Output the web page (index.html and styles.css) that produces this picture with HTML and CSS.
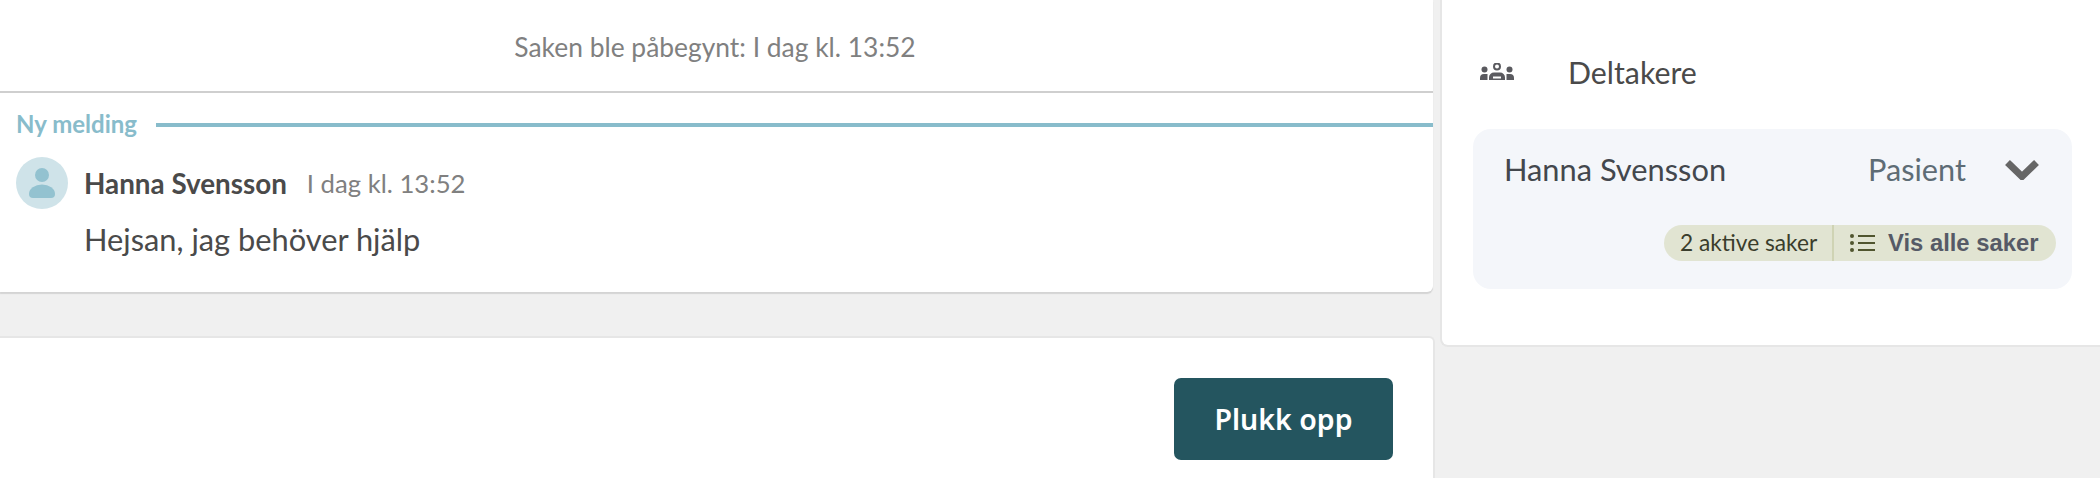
FILE: index.html
```html
<!DOCTYPE html>
<html lang="no">
<head>
<meta charset="utf-8">
<title>Sak</title>
<link rel="stylesheet" href="styles.css">
</head>
<body>
<div class="page">
  <main class="main">
    <section class="thread">
      <div class="started">Saken ble påbegynt: I dag kl. 13:52</div>
      <div class="new-row"><span class="new-label">Ny melding</span><span class="new-line"></span></div>
      <div class="msg-head">
        <span class="avatar">
          <svg viewBox="0 0 52 52" width="52" height="52"><circle cx="26" cy="18" r="7" fill="#93c2d0"/><path d="M13 37a13 9.500 0 0 1 26 0a4 4 0 0 1-4 4H17a4 4 0 0 1-4-4z" fill="#93c2d0"/></svg>
        </span>
        <span class="author">Hanna Svensson</span>
        <span class="time">I dag kl. 13:52</span>
      </div>
      <div class="msg-body">Hejsan, jag behöver hjälp</div>
    </section>
    <section class="actions">
      <button class="pick">Plukk opp</button>
    </section>
  </main>
  <aside class="side">
    <div class="side-title">
      <svg class="people" viewBox="0 0 34 18" width="34" height="18"><circle cx="17" cy="3.500" r="3" fill="none" stroke="#5a5a5f" stroke-width="2"/><path d="M9 17v-2.500a5 5 0 0 1 5-5h6a5 5 0 0 1 5 5V17z" fill="#5a5a5f"/><path d="M13 14.500h8" stroke="#fff" stroke-width="2"/><circle cx="4.500" cy="6.500" r="3" fill="#5a5a5f"/><circle cx="29.500" cy="6.500" r="3" fill="#5a5a5f"/><path d="M0 17v-2a4 4 0 0 1 4-4h3.500v6zM34 17v-2a4 4 0 0 0-4-4h-3.500v6z" fill="#5a5a5f"/></svg>
      <span>Deltakere</span>
    </div>
    <div class="person">
      <div class="person-row">
        <span class="person-name">Hanna Svensson</span>
        <span class="role">Pasient</span>
        <svg class="chev" viewBox="0 0 34 21" width="34" height="21"><path d="M2.500 3.500L17 17.500L31.500 3.500" fill="none" stroke="#666" stroke-width="7"/></svg>
      </div>
      <div class="pill-row">
        <div class="pill">
          <span class="count">2 aktive saker</span>
          <span class="show">
            <svg viewBox="0 0 25 20" width="25" height="20"><circle cx="2" cy="3" r="2" fill="#50552f"/><circle cx="2" cy="10" r="2" fill="#50552f"/><circle cx="2" cy="17" r="2" fill="#50552f"/><path d="M8 3h17M8 10h17M8 17h17" stroke="#50552f" stroke-width="2"/></svg>
            <span class="show-text">Vis alle saker</span>
          </span>
        </div>
      </div>
    </div>
  </aside>
</div>
</body>
</html>
```
FILE: styles.css
```css
* { box-sizing: border-box; }
html, body { margin: 0; height: 478px; overflow: hidden; background: #f0f0f0; }
body { font-family: Lato, "Noto Sans", sans-serif; color: #4a4a4a; }
.page { display: flex; gap: 7px; height: 478px; }
.main { width: 1433px; display: flex; flex-direction: column; gap: 44px; }
.thread { height: 292px; background: #fff; border-radius: 0 0 6px 0; box-shadow: 0 2px 1px #d4d4d4; }
.started { height: 93px; padding-right: 3px; border-bottom: 2px solid #cfcfcf; text-align: center; font-size: 26.400px; line-height: 94px; color: #808080; }
.new-row { display: flex; align-items: center; gap: 19px; padding: 0 0 1px 16px; height: 64px; }
.new-label { font-size: 24px; line-height: 28px; margin-top: -2px; font-weight: 700; color: #88bccb; }
.new-line { flex: 1; height: 4px; background: #88bccb; }
.msg-head { display: flex; align-items: center; height: 52px; padding-left: 16px; }
.avatar { width: 52px; height: 52px; border-radius: 50%; background: #cfe3e9; display: flex; margin-right: 16px; }
.author { font-size: 27.800px; font-weight: 700; color: #4a4a4a; margin-right: 20px; }
.time { font-size: 25.700px; color: #808080; }
.msg-body { padding: 11px 0 0 84px; font-size: 30.800px; line-height: 40px; color: #4a4a4a; }
.actions { flex: 1; margin-right: -2px; background: #fff; border-radius: 0 6px 0 0; border-top: 2px solid #e6e6e6; border-right: 2px solid #e6e6e6; display: flex; justify-content: flex-end; align-items: flex-start; padding: 40px 40px 0 0; }
.pick { width: 219px; height: 82px; border: 0; border-radius: 7px; background: #24555f; color: #fff; font: 600 28.500px "Noto Sans", sans-serif; }
.side { flex: 1; height: 347px; background: #fff; border-left: 2px solid #e6e6e6; border-bottom: 2px solid #e6e6e6; border-radius: 0 0 0 8px; padding: 0 28px 0 31px; }
.side-title { display: flex; align-items: center; height: 129px; padding: 15px 0 0 7px; font-size: 30.300px; color: #4a4a4a; }
.people { margin-right: 54px; }
.person { height: 160px; background: #f4f6fa; border-radius: 18px; padding: 0 16px 0 31px; }
.person-row { display: flex; align-items: center; height: 80px; padding-right: 17px; }
.person-name { flex: 1; font-size: 30.800px; color: #43474d; }
.role { font-size: 30.700px; color: #5e6c75; margin-right: 39px; }
.pill-row { display: flex; justify-content: flex-end; padding-top: 16px; }
.pill { display: flex; height: 36px; background: #e1e4d2; border-radius: 18px; }
.count { width: 170px; padding-left: 16px; font-size: 22.700px; line-height: 36px; color: #3a3d2c; border-right: 2px solid #cfd3b4; }
.show { display: flex; align-items: center; width: 222px; padding-left: 16px; gap: 13px; }
.show-text { font: 700 23.800px "Liberation Sans", sans-serif; color: #565a66; }
```
